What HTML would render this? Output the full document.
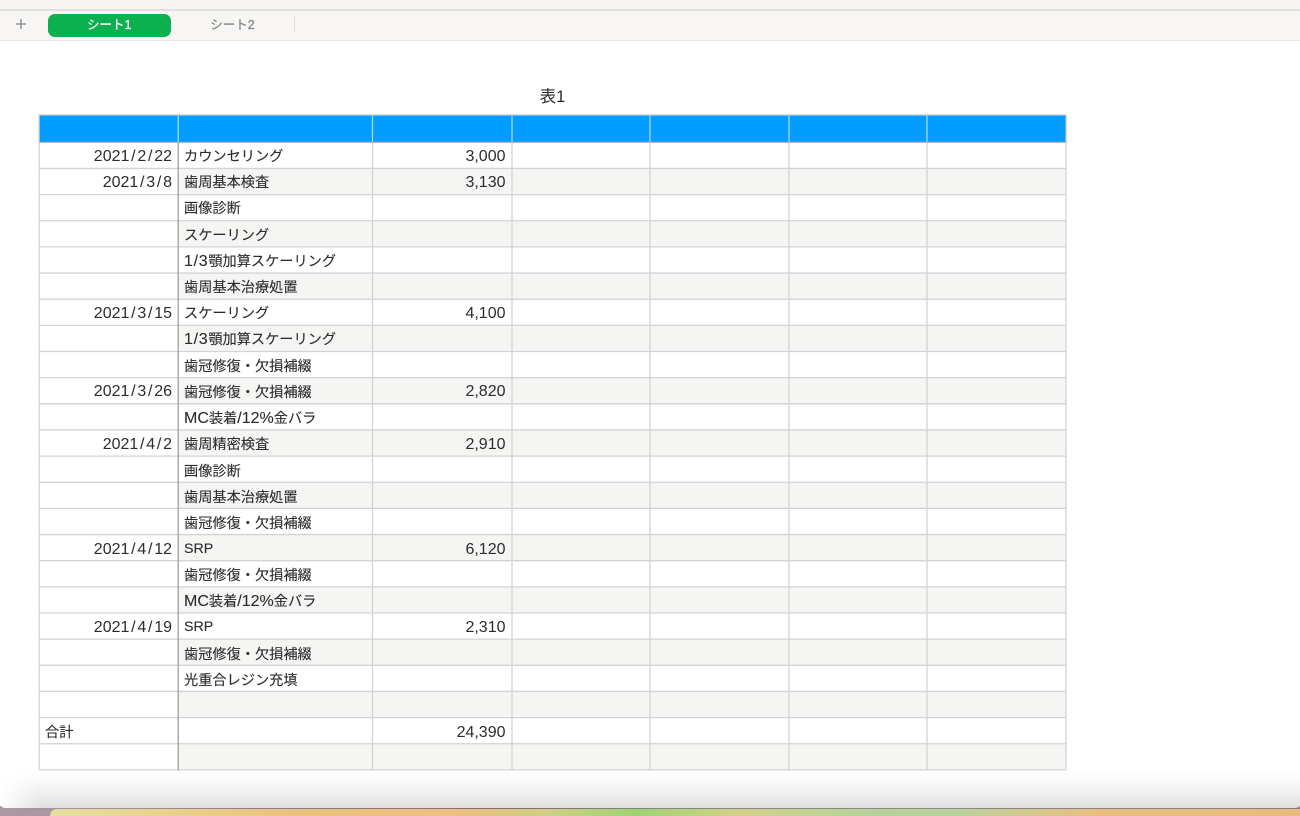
<!DOCTYPE html>
<html lang="ja">
<head>
<meta charset="utf-8">
<title>シート1</title>
<style>
html,body{margin:0;padding:0;width:1300px;height:816px;overflow:hidden;background:#fff}
body{position:relative;font-family:"Liberation Sans","Noto Sans CJK JP",sans-serif;color:#2c2c2c}
div,svg{position:absolute;box-sizing:border-box}
.t{font-size:14.2px;line-height:20px;left:184px;white-space:nowrap;filter:blur(.35px);-webkit-text-stroke:.12px}
.t b{font-weight:normal;font-size:16px}
.d{font-size:16px;line-height:20px;width:130px;left:42px;text-align:right;white-space:nowrap;filter:blur(.35px)}
.d i{font-style:normal;padding:0 1.75px}
.n{font-size:16px;line-height:20px;width:100px;left:405.5px;text-align:right;white-space:nowrap;filter:blur(.35px)}
.tab{top:13.5px;height:23px;line-height:23px;text-align:center;font-size:12.5px;-webkit-text-stroke:.3px;filter:blur(.3px)}
</style>
</head>
<body>
<div style="left:0;top:0;width:1300px;height:10px;background:#f6f5f3"></div>
<div style="left:0;top:9px;width:1300px;height:2px;background:#dfdfdd"></div>
<div style="left:0;top:11px;width:1300px;height:29px;background:#f7f6f4"></div>
<div style="left:0;top:40px;width:1300px;height:1px;background:#e6e6e5"></div>
<svg style="left:0;top:0" width="40" height="40"><path d="M16 24H26M21 19V29" stroke="#858585" stroke-width="1.3" fill="none"/></svg>
<div style="left:47.5px;top:13.5px;width:123.5px;height:23px;border-radius:7px;background:#0cb14f"></div>
<div class="tab" style="left:47.5px;width:123.5px;color:#fff">シート1</div>
<div class="tab" style="left:171px;width:123px;color:#8a8a8a">シート2</div>
<div style="left:294px;top:16px;width:1px;height:16px;background:#dededc"></div>

<div style="left:500px;width:105px;top:87px;line-height:20px;text-align:center;font-size:16.5px;color:#2b2b2b;filter:blur(.3px)">表1</div>

<svg style="left:0;top:0" width="1300" height="816" viewBox="0 0 1300 816">
<g fill="#f5f5f3">
<rect x="178" y="168.45" width="888" height="26.15"/>
<rect x="178" y="220.75" width="888" height="26.15"/>
<rect x="178" y="273.05" width="888" height="26.15"/>
<rect x="178" y="325.35" width="888" height="26.15"/>
<rect x="178" y="377.65" width="888" height="26.15"/>
<rect x="178" y="429.95" width="888" height="26.15"/>
<rect x="178" y="482.25" width="888" height="26.15"/>
<rect x="178" y="534.55" width="888" height="26.15"/>
<rect x="178" y="586.85" width="888" height="26.15"/>
<rect x="178" y="639.15" width="888" height="26.15"/>
<rect x="178" y="691.45" width="888" height="26.15"/>
<rect x="178" y="743.75" width="888" height="26.15"/>
</g>
<g stroke="#d3d3d3" stroke-width="1.3" fill="none">
<path d="M39 168.45H1066.5M39 194.6H1066.5M39 220.75H1066.5M39 246.9H1066.5M39 273.05H1066.5M39 299.2H1066.5M39 325.35H1066.5M39 351.5H1066.5M39 377.65H1066.5M39 403.8H1066.5M39 429.95H1066.5M39 456.1H1066.5M39 482.25H1066.5M39 508.4H1066.5M39 534.55H1066.5M39 560.7H1066.5M39 586.85H1066.5M39 613H1066.5M39 639.15H1066.5M39 665.3H1066.5M39 691.45H1066.5M39 717.6H1066.5M39 743.75H1066.5M39 769.9H1066.5"/>
<path d="M39.2 142V770.5M372.5 142V770.5M512 142V770.5M650 142V770.5M789 142V770.5M927 142V770.5M1066 142V770.5"/>
</g>
<path d="M178.2 142V770.5" stroke="#a29e9a" stroke-width="1.3"/>
<rect x="39" y="115" width="1027.5" height="27.3" fill="#009cff"/>
<path d="M39 115H1066.5" stroke="#c8c8c8" stroke-width="1.2"/>
<path d="M39 142.3H1066.5" stroke="#a9a9a9" stroke-width="1.2"/>
<path d="M39.2 114.5V142.5M1066 114.5V142.5" stroke="#c4c4c4" stroke-width="1.2"/>
<path d="M178.2 115.6V141.7M372.5 115.6V141.7M512 115.6V141.7M650 115.6V141.7M789 115.6V141.7M927 115.6V141.7" stroke="#a8d8f8" stroke-width="1.3"/>
</svg>

<div class="d" style="top:147px">2021<i>/</i>2<i>/</i>22</div>
<div class="d" style="top:173px">2021<i>/</i>3<i>/</i>8</div>
<div class="d" style="top:304px">2021<i>/</i>3<i>/</i>15</div>
<div class="d" style="top:382px">2021<i>/</i>3<i>/</i>26</div>
<div class="d" style="top:435px">2021<i>/</i>4<i>/</i>2</div>
<div class="d" style="top:540px">2021<i>/</i>4<i>/</i>12</div>
<div class="d" style="top:618px">2021<i>/</i>4<i>/</i>19</div>

<div class="t" style="top:147px">カウンセリング</div>
<div class="t" style="top:173px">歯周基本検査</div>
<div class="t" style="top:199px">画像診断</div>
<div class="t" style="top:226px">スケーリング</div>
<div class="t" style="top:252px"><b style="letter-spacing:.7px">1/3</b>顎加算スケーリング</div>
<div class="t" style="top:278px">歯周基本治療処置</div>
<div class="t" style="top:304px">スケーリング</div>
<div class="t" style="top:330px"><b style="letter-spacing:.7px">1/3</b>顎加算スケーリング</div>
<div class="t" style="top:357px">歯冠修復・欠損補綴</div>
<div class="t" style="top:383px">歯冠修復・欠損補綴</div>
<div class="t" style="top:409px"><b>MC</b>装着<b>/12%</b>金バラ</div>
<div class="t" style="top:435px">歯周精密検査</div>
<div class="t" style="top:462px">画像診断</div>
<div class="t" style="top:488px">歯周基本治療処置</div>
<div class="t" style="top:514px">歯冠修復・欠損補綴</div>
<div class="t" style="top:539px">SRP</div>
<div class="t" style="top:566px">歯冠修復・欠損補綴</div>
<div class="t" style="top:592px"><b>MC</b>装着<b>/12%</b>金バラ</div>
<div class="t" style="top:617px">SRP</div>
<div class="t" style="top:645px">歯冠修復・欠損補綴</div>
<div class="t" style="top:671px">光重合レジン充填</div>
<div class="t" style="left:45px;top:723px">合計</div>

<div class="n" style="top:147px">3,000</div>
<div class="n" style="top:173px">3,130</div>
<div class="n" style="top:304px">4,100</div>
<div class="n" style="top:382px">2,820</div>
<div class="n" style="top:435px">2,910</div>
<div class="n" style="top:540px">6,120</div>
<div class="n" style="top:618px">2,310</div>
<div class="n" style="top:723px">24,390</div>

<div style="left:0;top:806px;width:1300px;height:10px;background:#a99aa2"></div>
<div style="left:0;top:808px;width:1300px;height:1.5px;background:linear-gradient(90deg,#a99aa2 0,#8f7f88 20%,#8a6a70 40%,#7f8a80 50%,#8f8a80 70%,#8a7a80 100%)"></div>
<div style="left:50px;top:809px;width:1250px;height:7px;border-radius:8px 0 0 0;background:linear-gradient(90deg,#e6dfa0 0,#e9d48f 8%,#ecc07f 20%,#eebf80 32%,#cdd085 40%,#a0d272 47%,#d3d189 55%,#b6d29a 66%,#b8d29c 72%,#ebbe80 84%,#e9bb7c 100%)"></div>
<div style="left:0;top:772px;width:1300px;height:36px;border-radius:0 0 5px 5px;background:linear-gradient(180deg,#fff 0,#f8f8f8 30%,#e0e0e0 100%)"></div>
<div style="left:0;top:772px;width:40px;height:36px;border-radius:0 0 0 5px;background:linear-gradient(90deg,#fff 0,rgba(255,255,255,0) 100%)"></div>
</body>
</html>
